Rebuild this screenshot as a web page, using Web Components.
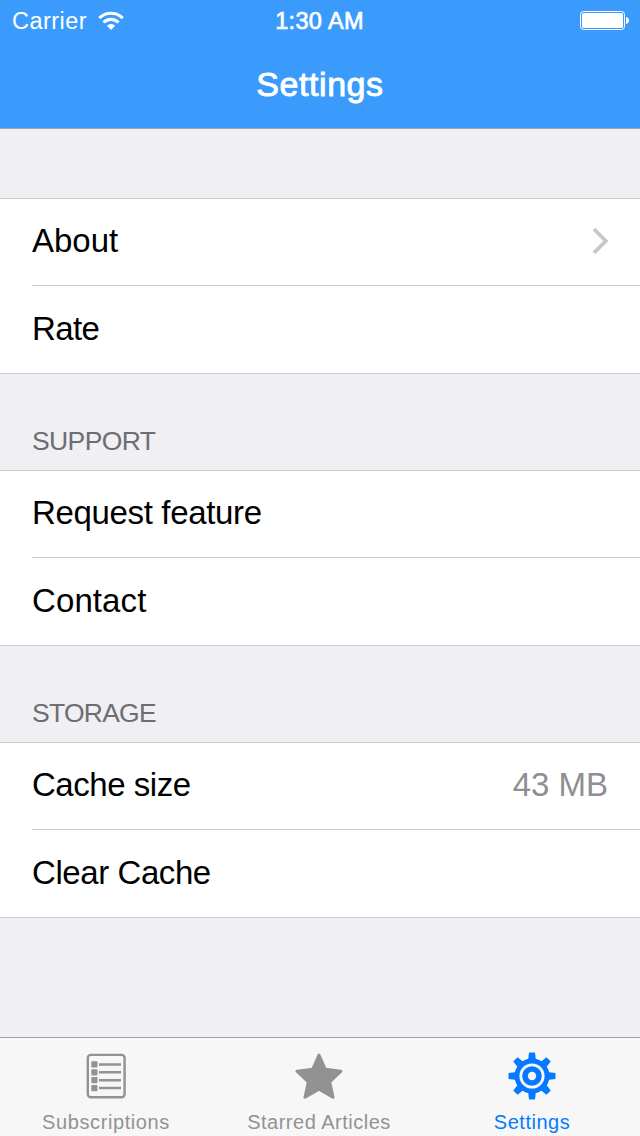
<!DOCTYPE html>
<html lang="en">
<head>
<meta charset="utf-8">
<title>Settings</title>
<style>
html, body { margin: 0; height: 100%; }
body { font-family: "Liberation Sans", Arial, sans-serif; background: #efeff4; overflow: hidden; }
</style>
</head>
<body>
<settings-app></settings-app>
<script>
const define = (name, html) => {
  const template = document.createElement('template');
  template.innerHTML = html;
  customElements.define(name, class extends HTMLElement {
    constructor() {
      super();
      this.attachShadow({ mode: 'open' }).append(template.content.cloneNode(true));
    }
  });
};

define('status-bar', `
<style>
:host { display: grid; grid-template-columns: 1fr auto 1fr; align-items: center; height: 40px; padding: 1px 11px 0 12px; box-sizing: content-box; color: #fff; font-size: 24px; line-height: 40px; }
.left { display: flex; align-items: center; gap: 11px; }
.carrier { letter-spacing: .45px; font-size: 23.5px; }
.time { font-size: 23.5px; -webkit-text-stroke: .7px #fff; letter-spacing: .35px; position: relative; left: -1px; }
.right { display: flex; justify-content: flex-end; }
svg { display: block; }
</style>
<div class="left"><span class="carrier">Carrier</span>
<svg width="26" height="20" viewBox="0 0 26 20"><g fill="none" stroke="#fff" stroke-width="3.100"><path d="M1.300 7.100C8 .7 18 .7 24.700 7.100"/><path d="M5.500 11.500c4.300-4.200 10.700-4.200 15 0"/></g><path d="M8.900 14.700c2.500-2.400 5.700-2.400 8.200 0L13 19z" fill="#fff"/></svg></div>
<span class="time">1:30 AM</span>
<div class="right"><svg width="49" height="20" viewBox="0 0 49 20"><rect x=".5" y=".5" width="44" height="18" rx="3" fill="none" stroke="#fff"/><rect x="2" y="2" width="41" height="15" rx="1.500" fill="#fff"/><path d="M46 6c4 .7 4 6.300 0 7z" fill="#fff"/></svg></div>`);

define('nav-bar', `
<style>
:host { display: flex; flex-direction: column; height: 128px; background: #3a9bfc; border-bottom: 1px solid #a3a4ab; color: #fff; }
.title { flex: 1; text-align: center; font-size: 34px; line-height: 87px; -webkit-text-stroke: .9px #fff; letter-spacing: .55px; }
</style>
<status-bar></status-bar>
<div class="title"><slot></slot></div>`);

define('settings-group', `
<style>
:host { display: block; }
.header { display: flex; align-items: flex-end; height: 96px; box-sizing: border-box; padding: 0 32px 13px; font-size: 26.500px; line-height: 32px; color: #6d6d72; letter-spacing: var(--tracking, -.2px); }
:host([plain]) .header { height: 69px; }
.rows { background: #fff; border-top: 1px solid #c8c7cc; border-bottom: 1px solid #c8c7cc; }
</style>
<div class="header"><slot name="header"></slot></div>
<div class="rows"><slot></slot></div>`);

define('settings-row', `
<style>
:host { display: flex; justify-content: space-between; align-items: center; height: 87px; margin-left: 32px; padding: 0 32px 2px 0; box-sizing: border-box; font-size: 33px; line-height: 84px; color: #000; }
:host([divided]) { border-bottom: 1px solid #c8c7cc; }
.label { letter-spacing: var(--tracking, 0); }
::slotted([slot=value]) { color: #8e8e93; }
</style>
<span class="label"><slot></slot></span><slot name="value"></slot>`);

define('chevron-icon', `
<style>:host { display: block; margin-right: -1px; } svg { display: block; }</style>
<svg width="17" height="28" viewBox="0 0 17 28"><path d="M2 2.200 13.800 14 2 25.800" fill="none" stroke="#c7c7cc" stroke-width="3.800"/></svg>`);

define('tab-item', `
<style>
:host { display: flex; flex-direction: column; align-items: center; padding-top: 14px; box-sizing: border-box; color: #929292; font-size: 20px; }
:host([active]) { color: #067aff; }
.label { line-height: 24px; margin-top: 10px; white-space: nowrap; letter-spacing: var(--tracking, .5px); }
::slotted(svg) { display: block; }
</style>
<slot name="icon"></slot><span class="label"><slot></slot></span>`);

define('tab-bar', `
<style>
:host { display: grid; grid-template-columns: 212px 214px 212px; height: 99px; box-sizing: border-box; border-top: 1px solid #a2a2a6; background: #f7f7f7; }
</style><slot></slot>`);

define('settings-app', `
<style>
:host { display: flex; flex-direction: column; width: 640px; height: 1136px; background: #efeff4; }
main { flex: 1; }
</style>
<nav-bar>Settings</nav-bar>
<main>
<settings-group plain>
<settings-row divided>About<chevron-icon slot="value"></chevron-icon></settings-row>
<settings-row style="--tracking:-.65px">Rate</settings-row>
</settings-group>
<settings-group><span slot="header" style="letter-spacing:-.6px">SUPPORT</span>
<settings-row divided style="--tracking:-.34px">Request feature</settings-row>
<settings-row style="--tracking:.1px">Contact</settings-row>
</settings-group>
<settings-group><span slot="header" style="letter-spacing:-.75px">STORAGE</span>
<settings-row divided style="--tracking:-.47px">Cache size<span slot="value">43 MB</span></settings-row>
<settings-row style="--tracking:-.42px">Clear Cache</settings-row>
</settings-group>
</main>
<tab-bar>
<tab-item style="--tracking:.6px">
<svg slot="icon" width="48" height="48" viewBox="0 0 48 48"><rect x="5.800" y="2.900" width="36.800" height="42.300" rx="3" fill="none" stroke="currentColor" stroke-width="2.400"/><g fill="currentColor"><rect x="9.300" y="9.300" width="6.200" height="6.200" rx="1"/><rect x="9.300" y="17.200" width="6.200" height="6.200" rx="1"/><rect x="9.300" y="25.100" width="6.200" height="6.200" rx="1"/><rect x="9.300" y="33" width="6.200" height="6.200" rx="1"/></g><path d="M17 12.400h22M17 20.300h22M17 28.200h22M17 36h22" stroke="currentColor" stroke-width="2.500"/></svg>Subscriptions</tab-item>
<tab-item>
<svg slot="icon" width="48" height="48" viewBox="0 0 48 48"><path d="M24 3l6.300 14.300 15.700 1.900-11.300 10.600L38 45.300 24 37.200 10 45.300l3.300-15.500L2 19.200l15.700-1.900z" fill="currentColor" stroke="currentColor" stroke-width="3" stroke-linejoin="round"/></svg>Starred Articles</tab-item>
<tab-item active>
<svg slot="icon" width="48" height="48" viewBox="0 0 48 48"><g fill="currentColor"><circle cx="24" cy="24" r="17.500"/><path d="M20 9l1-8.500h6L28 9v30l-1 8.500h-6L20 39z"/><path d="M20 9l1-8.500h6L28 9v30l-1 8.500h-6L20 39z" transform="rotate(45 24 24)"/><path d="M20 9l1-8.500h6L28 9v30l-1 8.500h-6L20 39z" transform="rotate(90 24 24)"/><path d="M20 9l1-8.500h6L28 9v30l-1 8.500h-6L20 39z" transform="rotate(135 24 24)"/></g><circle cx="24" cy="24" r="11.200" fill="none" stroke="#f7f7f7" stroke-width="2.800"/><circle cx="24" cy="24" r="4.200" fill="#f7f7f7"/></svg>Settings</tab-item>
</tab-bar>`);
</script>
</body>
</html>
